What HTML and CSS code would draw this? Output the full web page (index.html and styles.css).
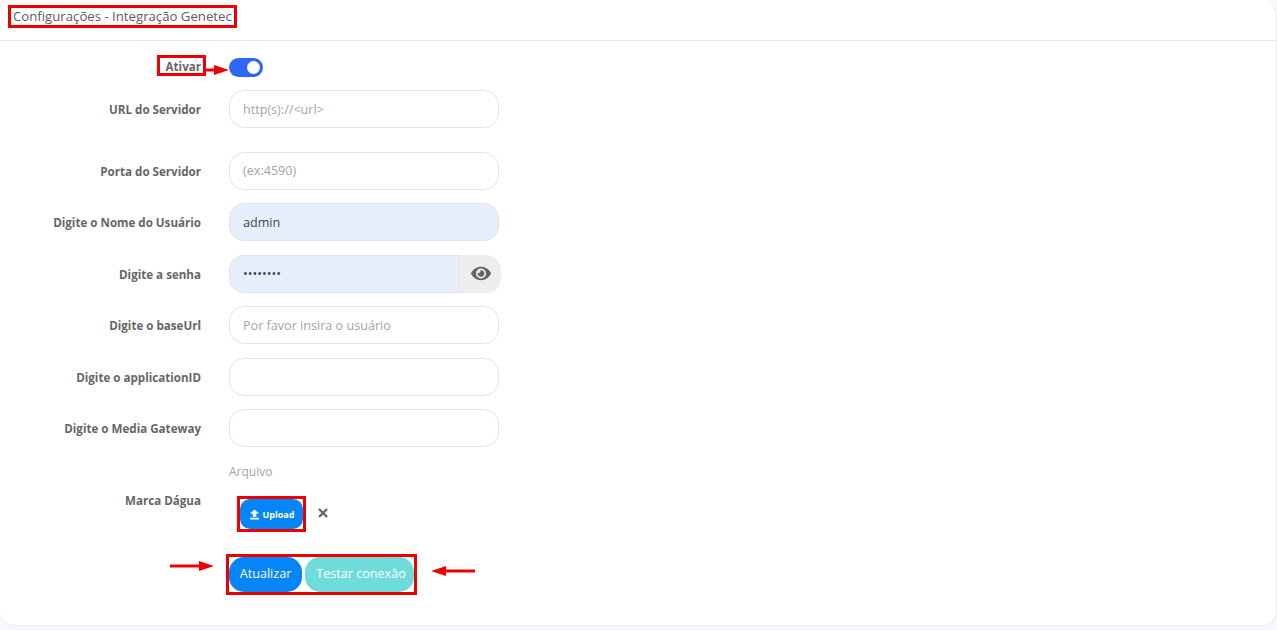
FILE: index.html
```html
<!DOCTYPE html>
<html lang="pt-BR">
<head>
    <meta charset="UTF-8" />
    <title>Configurações - Integração Genetec</title>
    <link rel="stylesheet" href="styles.css">
</head>
<body>
    <div class="card">
        <div class="card-header">
            <span class="card-title marked">Configurações - Integração Genetec</span>
        </div>
        <form class="card-body">
            <!-- Ativar -->
            <div class="row row-toggle">
                <label class="row-label"><span class="marked marked-label">Ativar</span></label>
                <span class="switch"><span class="switch-knob"></span></span>
                <svg class="arrow arrow-toggle" width="24" height="10" viewBox="0 0 24 10"><path d="M0 3.500h11v3H0z" fill="#ee0000"/><path d="M8 0l15 5-15 5z" fill="#ee0000"/></svg>
            </div>

            <div class="row row-url">
                <label class="row-label">URL do Servidor</label>
                <input class="field" type="text" placeholder="http(s)://<url>">
            </div>
            <div class="row">
                <label class="row-label">Porta do Servidor</label>
                <input class="field" type="text" placeholder="(ex:4590)">
            </div>
            <div class="row">
                <label class="row-label">Digite o Nome do Usuário</label>
                <input class="field field-filled" type="text" value="admin">
            </div>
            <div class="row">
                <label class="row-label">Digite a senha</label>
                <div class="field-group">
                    <input class="field field-filled" type="password" value="12345678">
                    <span class="field-append">
                        <svg width="20" height="15" viewBox="0 48 576 416"><path fill="#666" d="M572.5 241.4C518.3 135.6 410.9 64 288 64S57.700 135.600 3.500 241.400a32.400 32.400 0 0 0 0 29.200C57.700 376.400 165.100 448 288 448s230.300-71.600 284.500-177.400a32.400 32.400 0 0 0 0-29.200zM288 400a144 144 0 1 1 144-144 143.900 143.900 0 0 1-144 144zm0-240a95.300 95.300 0 0 0-25.300 3.800 47.900 47.900 0 0 1-66.900 66.900A95.800 95.800 0 1 0 288 160z"/></svg>
                    </span>
                </div>
            </div>
            <div class="row">
                <label class="row-label">Digite o baseUrl</label>
                <input class="field" type="text" placeholder="Por favor insira o usuário">
            </div>
            <div class="row">
                <label class="row-label">Digite o applicationID</label>
                <input class="field" type="text">
            </div>
            <div class="row">
                <label class="row-label">Digite o Media Gateway</label>
                <input class="field" type="text">
            </div>

            <!-- Marca dagua -->
            <div class="row row-file">
                <label class="row-label">Marca Dágua</label>
                <div class="file-box">
                    <div class="file-caption">Arquivo</div>
                    <div class="file-actions">
                        <button type="button" class="btn-upload marked">
                            <svg width="11" height="11" viewBox="0 0 24 24"><path fill="#fff" d="M8 17V10H2l10-9 10 9h-6v7zM2 23v-4h20v4z"/></svg>
                            Upload
                        </button>
                        <svg class="file-clear" width="10" height="10" viewBox="0 0 10 10"><path d="M1 1l8 8M9 1l-8 8" stroke="#666" stroke-width="2.4"/></svg>
                    </div>
                </div>
            </div>

            <div class="row row-actions">
                <div class="actions marked">
                    <button type="button" class="btn btn-primary">Atualizar</button>
                    <button type="button" class="btn btn-info">Testar conexão</button>
                </div>
                <svg class="arrow arrow-left" width="44" height="10" viewBox="0 0 44 10"><path d="M0 3.500h32v3H0z" fill="#ee0000"/><path d="M29 0l15 5-15 5z" fill="#ee0000"/></svg>
                <svg class="arrow arrow-right" width="44" height="10" viewBox="0 0 44 10"><path d="M12 3.500h32v3H12z" fill="#ee0000"/><path d="M15 0L0 5l15 5z" fill="#ee0000"/></svg>
            </div>
        </form>
    </div>
</body>
</html>
```

FILE: styles.css
```css
body {
    font-family: "Open Sans", sans-serif;
    margin: 0;
    background-color: #f8f8fc;
    height: 630px;
    overflow: hidden;
}
.card {
    background: #fff;
    border: 1px solid #ebebf0;
    border-top: none;
    border-left: none;
    border-radius: 15px;
    height: 626px;
    box-sizing: border-box;
    width: 1277px;
}
.card-header {
    display: flex;
    align-items: flex-start;
    height: 41px;
    box-sizing: border-box;
    border-bottom: 1px solid #e8e8ec;
    padding: 7px 13px 0;
}
.card-title {
    font-size: 13.2px;
    line-height: 18px;
    color: #5c5c66;
}
.card-body {
    padding: 17px 0 0;
}
/* red marks over the screenshot */
.marked {
    position: relative;
}
.marked::after {
    content: "";
    position: absolute;
    top: -3px;
    right: -3px;
    bottom: -3px;
    left: -3px;
    border: 3px solid #ee0000;
    pointer-events: none;
}
.card-title.marked::after {
    top: -2px;
    left: -5px;
    right: -5px;
    bottom: -3px;
}
.marked-label::after {
    top: -4px;
    left: -9px;
    right: -5px;
    bottom: -2px;
}
.arrow {
    position: absolute;
}
.row {
    position: relative;
    display: flex;
    align-items: center;
    min-height: 38px;
    margin-bottom: 13.5px;
}
.row-label {
    width: 201px;
    margin-right: 28px;
    flex-shrink: 0;
    text-align: right;
    font-size: 11.6px;
    font-weight: 700;
    color: #666;
    padding-top: 1px;
    box-sizing: border-box;
}
.row-toggle {
    min-height: 19px;
    margin-bottom: 13px;
}
.row-toggle .row-label {
    padding-top: 0;
    padding-bottom: 3px;
}
.row-url {
    margin-bottom: 23.5px;
}
.switch {
    display: block;
    width: 34px;
    height: 19px;
    border-radius: 10px;
    background-color: #2f66f6;
    position: relative;
}
.switch-knob {
    position: absolute;
    top: 3px;
    right: 3px;
    width: 13px;
    height: 13px;
    border-radius: 50%;
    background: #fff;
}
.arrow-toggle {
    left: 206px;
    top: 7px;
}
.field {
    width: 270px;
    height: 38px;
    box-sizing: border-box;
    padding: 0 13px;
    border: 1px solid #e3e3e8;
    border-radius: 15px;
    background: #fff;
    font-family: "Open Sans", sans-serif;
    font-size: 12.6px;
    color: #444;
    outline: none;
}
.field::placeholder {
    color: #a3a3a8;
}
.field-filled {
    background-color: #e8effc;
}
.field-group {
    display: flex;
    width: 272px;
}
.field-group .field {
    width: 230px;
    border-right: none;
    border-radius: 15px 0 0 15px;
}
.field-append {
    width: 42px;
    height: 38px;
    display: flex;
    align-items: center;
    justify-content: center;
    background-color: #eee;
    border-radius: 0 15px 15px 0;
    border-left: 1px solid #e3e3e8;
    box-sizing: border-box;
}
.row-file {
    align-items: flex-start;
    margin-top: 17px;
    margin-bottom: 28px;
}
.row-file .row-label {
    padding-top: 29px;
}
.file-caption {
    font-size: 12px;
    line-height: 16px;
    color: #a3a3a8;
}
.file-actions {
    display: flex;
    align-items: center;
    margin-top: 19px;
    padding-left: 11px;
}
.btn-upload {
    display: flex;
    align-items: center;
    justify-content: center;
    gap: 3px;
    width: 63px;
    height: 30px;
    padding: 0;
    border: none;
    border-radius: 10px;
    background-color: #0585f8;
    color: #fff;
    font-family: "Open Sans", sans-serif;
    font-size: 9px;
    font-weight: 700;
}
.file-clear {
    margin-left: 15px;
    margin-top: -2px;
}
.row-actions {
    align-items: flex-start;
    padding-left: 229px;
}
.actions {
    display: flex;
    gap: 3px;
}
.btn {
    height: 35px;
    border: none;
    border-radius: 15px;
    color: #fff;
    font-family: "Open Sans", sans-serif;
    font-size: 12.6px;
    padding: 0 0 2px;
}
.btn-primary {
    width: 73px;
    background-color: #0585f8;
}
.btn-info {
    width: 109px;
    padding-left: 3px;
    background-color: #6fdcdc;
}
.arrow-left {
    left: 170px;
    top: 4px;
}
.arrow-right {
    left: 431px;
    top: 9px;
}
```
